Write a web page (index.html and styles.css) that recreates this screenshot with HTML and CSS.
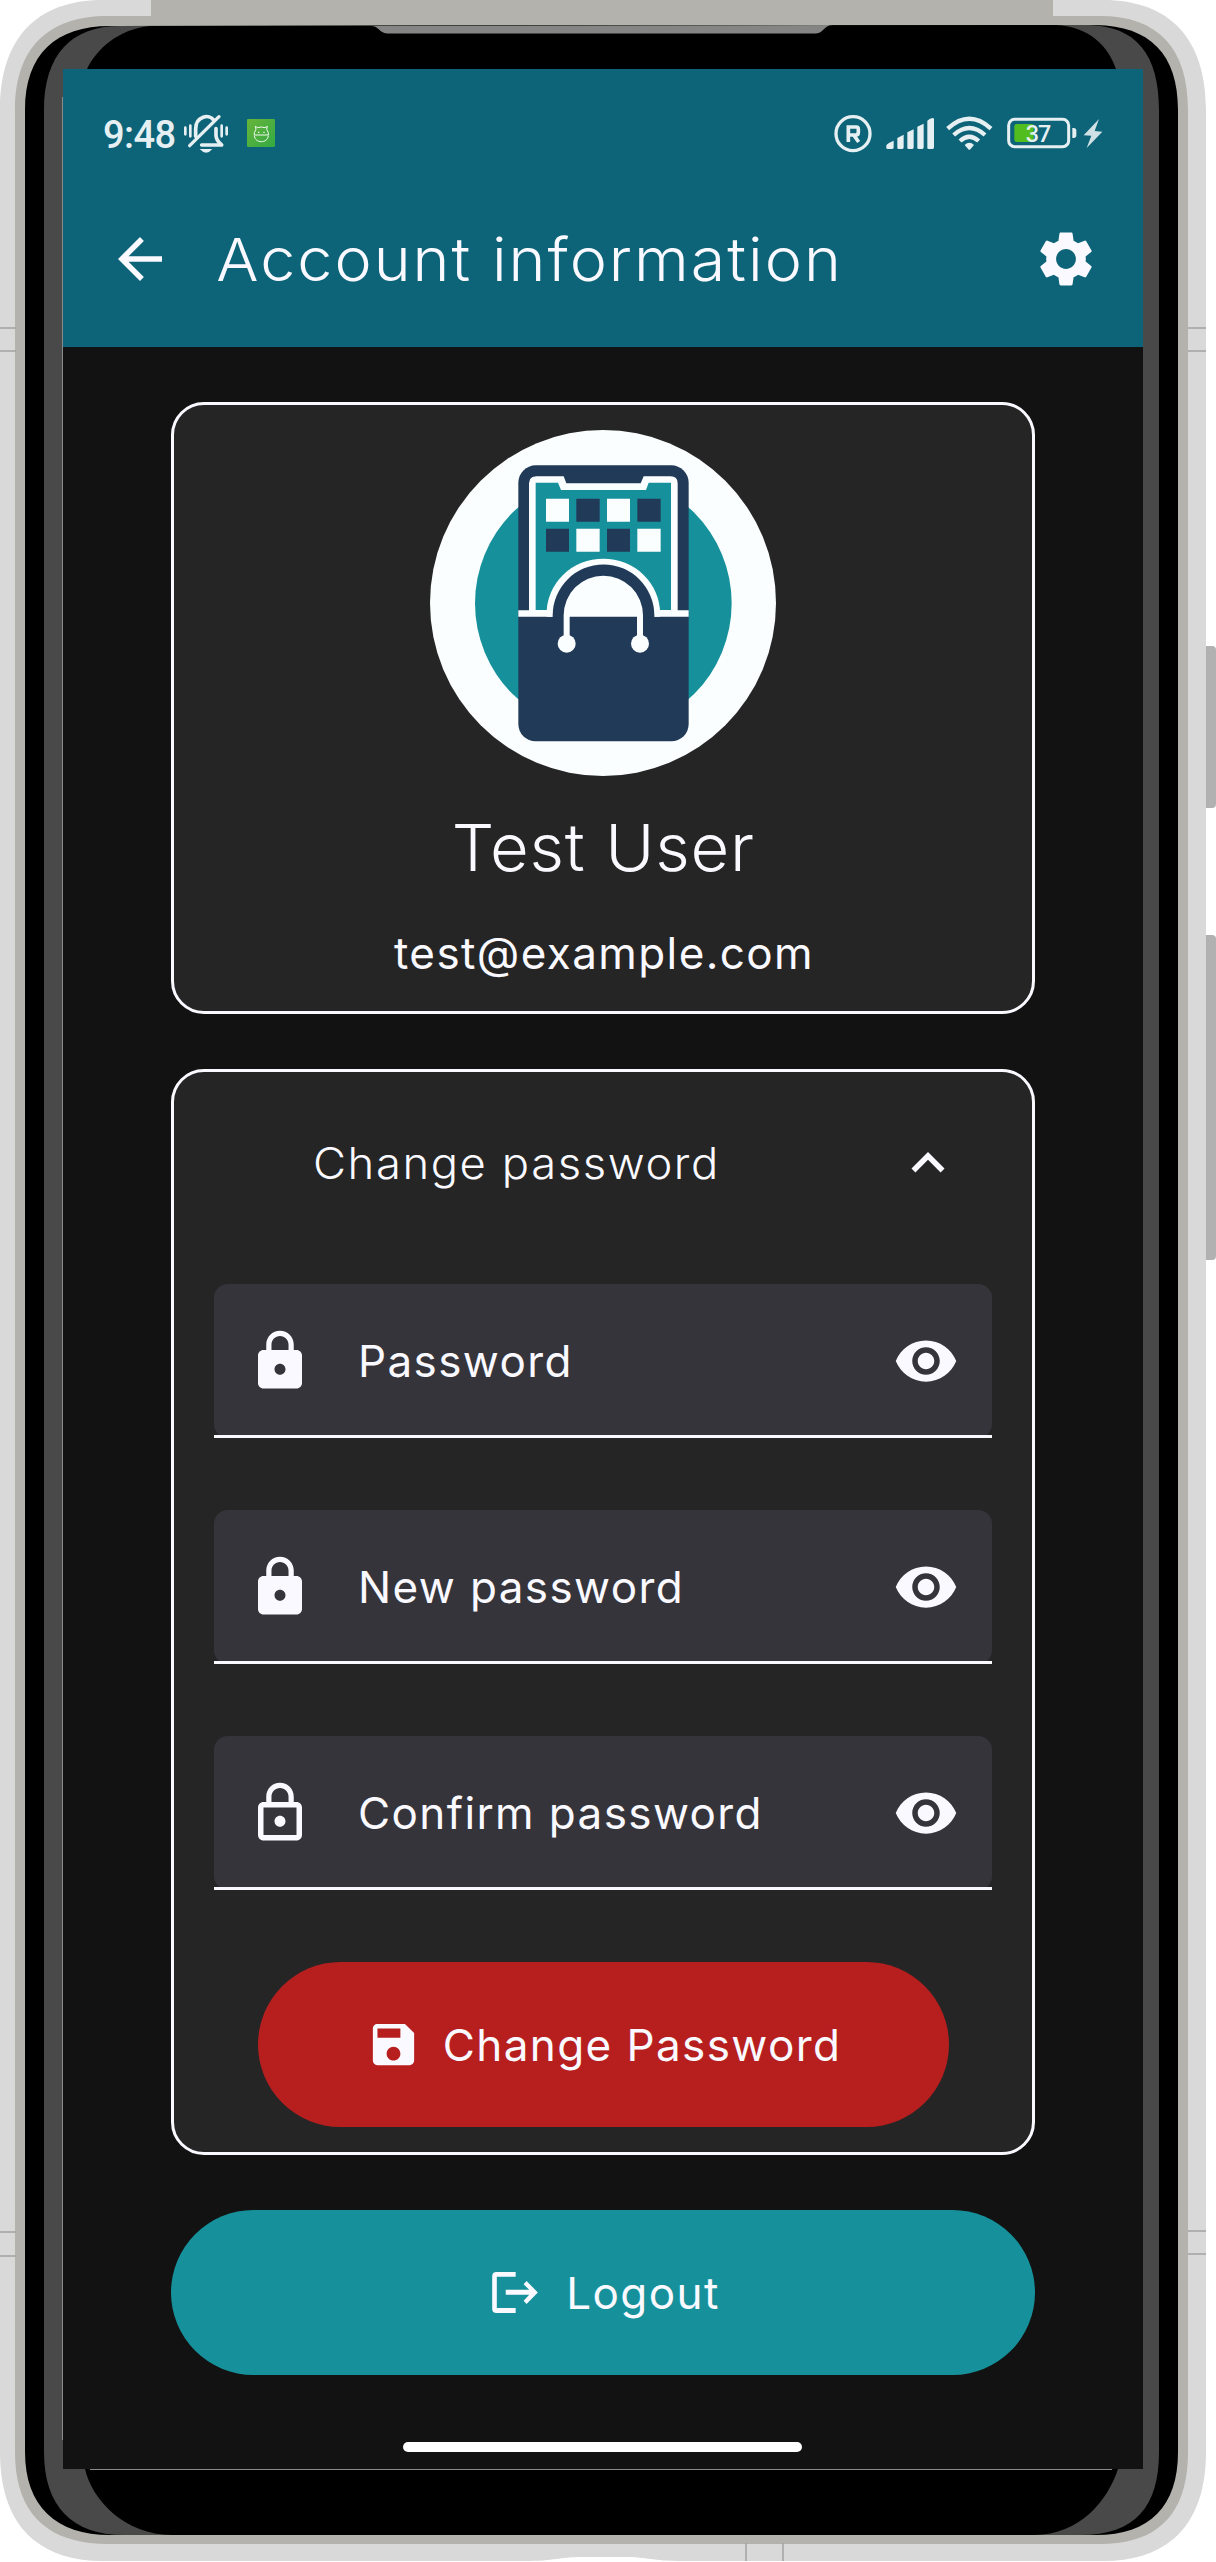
FILE: index.html
```html
<!DOCTYPE html>
<html lang="en">
<head>
<meta charset="utf-8">
<title>Account information</title>
<link rel="stylesheet" href="styles.css">
</head>
<body>
<svg width="0" height="0" class="defs" aria-hidden="true">
  <symbol id="eye" viewBox="0 0 24 24"><path d="M12 4.5C7 4.5 2.73 7.61 1 12c1.73 4.39 6 7.5 11 7.5s9.27-3.11 11-7.5c-1.73-4.39-6-7.5-11-7.5zM12 17c-2.76 0-5-2.24-5-5s2.24-5 5-5 5 2.24 5 5-2.24 5-5 5zm0-8c-1.66 0-3 1.34-3 3s1.34 3 3 3 3-1.34 3-3-1.34-3-3-3z"/></symbol>
  <symbol id="lock" viewBox="0 0 24 24"><path d="M18 8h-1V6c0-2.76-2.24-5-5-5S7 3.24 7 6v2H6c-1.1 0-2 .9-2 2v10c0 1.1.9 2 2 2h12c1.1 0 2-.9 2-2V10c0-1.1-.9-2-2-2zm-6 9c-1.1 0-2-.9-2-2s.9-2 2-2 2 .9 2 2-.9 2-2 2zm3.1-9H8.9V6c0-1.71 1.39-3.1 3.1-3.1s3.1 1.39 3.1 3.1v2z"/></symbol>
  <symbol id="lock-outline" viewBox="0 0 24 24"><path d="M12 17c1.1 0 2-.9 2-2s-.9-2-2-2-2 .9-2 2 .9 2 2 2zm6-9h-1V6c0-2.76-2.24-5-5-5S7 3.24 7 6v2H6c-1.1 0-2 .9-2 2v10c0 1.1.9 2 2 2h12c1.1 0 2-.9 2-2V10c0-1.1-.9-2-2-2zM8.9 6c0-1.71 1.39-3.1 3.1-3.1s3.1 1.39 3.1 3.1v2H8.9V6zM18 20H6V10h12v10z"/></symbol>
</svg>
<div class="phone">
  <svg class="frame" viewBox="0 0 1216 2562" aria-hidden="true">
    <path fill="#b1b1b1" d="M1200 646h12q4 0 4 4v154q0 4-4 4h-12zM1200 935h12q4 0 4 4v317q0 4-4 4h-12z"/>
    <path fill="#d9d9d9" d="M0 110C0 40 35 0 103 0H1103C1171 0 1206 40 1206 110V2452C1206 2522 1171 2561 1103 2561H683C650 2561 650 2557 624 2557H583C557 2557 557 2561 523 2561H103C35 2561 0 2522 0 2452Z"/>
    <path fill="#b3b2ad" d="M15 110C15 48 48 16 108 16H151V0H1053V16H1100C1158 16 1188 48 1188 110V2452C1188 2514 1158 2544 1100 2544H108C48 2544 15 2514 15 2452Z"/>
    <path fill="#000" d="M25 110C25 54 56 26 110 26L1096 25C1150 26 1178 54 1178 110V2452C1178 2506 1150 2535 1096 2535H110C56 2535 25 2506 25 2452Z"/>
    <path fill="#494949" d="M44 110C44 54 72 26 120 26L1088 25C1136 26 1159 54 1159 110V2452C1159 2506 1136 2535 1080 2535H124C72 2535 44 2506 44 2452Z"/>
    <path fill="#000" d="M150 26C118 29 96 50 87 69V2469H85C92 2500 125 2535 172 2535H1034C1080 2535 1108 2500 1118 2469H1116V69C1108 46 1090 27 1056 25Z"/>
    <path fill="#858585" d="M371 26C379 26 379 33 387 33.500H816C824 33 824 25 833 25Z"/>
    <path stroke="#a3a3a1" stroke-width="1.500" d="M0 328H16M0 351H16M1188 328H1206M1188 351H1206M0 2232H16M0 2256H16M1188 2231H1206M1188 2254H1206M746 2543V2561M783 2543V2561"/>
    <path stroke="#8a8a8a" d="M62.500 97V2440M90 2469.500H1112"/>
  </svg>
  <main class="screen">
    <header class="top">
      <div class="status">
        <span class="clock">9:48</span>
        <svg class="bell" width="46" height="40" viewBox="549 342 138 120">
          <g fill="none" stroke="#e6f0f3" stroke-linecap="round">
            <path stroke-width="8" d="M556 383v20M571 377v32M665 377v32M680 383v20"/>
            <path stroke-width="11" stroke-linejoin="round" d="M587 409v-22c0-40 42-45 54-27M648 386v20c0 14 7 21 17 29h-60"/>
            <path stroke-width="10" d="M569 437L657 350"/>
          </g>
          <path fill="#e6f0f3" d="M599 447h38q-18 22-38 0z"/>
        </svg>
        <svg class="droid" width="28" height="40" viewBox="741 342 84 120">
          <defs><linearGradient id="lime" x2="1" y2="1"><stop stop-color="#68b43a"/><stop offset="1" stop-color="#32aa43"/></linearGradient></defs>
          <rect x="741" y="357" width="84" height="84" rx="4" fill="url(#lime)"/>
          <path fill="none" stroke="#f2faef" stroke-width="3" stroke-linejoin="round" d="M763 405v-7l5-10-2-9 7 4q11-4 22 0l7-4-2 9 5 10v7zM763 407c2 24 40 24 42 0"/>
          <path fill="#f2faef" d="M774 395h4v4h-4zM790 395h4v4h-4z"/>
        </svg>
        <svg class="reg" width="38" height="40" viewBox="55 342 114 120">
          <circle cx="112" cy="401" r="51" fill="none" stroke="#e6f0f3" stroke-width="10"/>
          <path fill="none" stroke="#e6f0f3" stroke-width="11" d="M98 426v-45h24q6 0 6 7v9q0 8-7 8h-22M115 406l14 20"/>
        </svg>
        <svg class="signal" width="48" height="40" viewBox="210 342 144 120">
          <path fill="#e6f0f3" d="M211 436q0-4 22-14v20q0 5-4 5h-14q-4 0-4-4zM244 414l19-10v38q0 5-4 5h-11q-4 0-4-4zM274 397l19-9v54q0 5-4 5h-11q-4 0-4-4zM304 380l19-9v71q0 5-4 5h-11q-4 0-4-4zM334 362q8-7 16-8 4 0 4 4v84q0 5-4 5h-12q-4 0-4-4z"/>
        </svg>
        <svg class="wifi" width="47" height="40" viewBox="391 342 141 120">
          <g fill="none" stroke="#e6f0f3" stroke-width="13"><path d="M396 386Q461 327 526 386M414 405Q461 363 508 405M433 423Q461 398 489 423"/></g>
          <path fill="#e6f0f3" d="M447 435q14-13 28 0l-11 13q-3 3-6 0z"/>
        </svg>
        <svg class="battery" width="70" height="40" viewBox="575 342 210 120">
          <rect x="580" y="358" width="180" height="82" rx="18" fill="none" stroke="#e6f0f3" stroke-width="9"/>
          <rect x="597" y="372" width="58" height="54" rx="7" fill="#52bd1e"/>
          <path fill="#e6f0f3" d="M771 384h4q8 0 8 8v14q0 8-8 8h-4z"/>
          <text class="level" x="631" y="426" textLength="77">37</text>
        </svg>
        <svg class="bolt" width="20" height="40" viewBox="803 342 60 120"><path fill="#d0e1e6" d="M851 357l-46 49 23 1-14 37 47-49-23-2z"/></svg>
      </div>
      <div class="bar">
        <svg class="icon" viewBox="0 0 24 24"><path d="M20 11H7.830l5.590-5.590L12 4l-8 8 8 8 1.410-1.410L7.830 13H20v-2z"/></svg>
        <h1 class="title">Account information</h1>
        <svg class="icon" viewBox="0 0 24 24"><path d="M19.140 12.940c.04-.3.060-.61.060-.94 0-.32-.02-.64-.07-.94l2.030-1.580c.18-.14.23-.41.120-.61l-1.920-3.320c-.12-.22-.37-.29-.59-.22l-2.390.96c-.5-.38-1.030-.7-1.620-.94l-.36-2.540c-.04-.24-.24-.41-.48-.41h-3.840c-.24 0-.43.17-.47.41l-.36 2.540c-.59.24-1.130.57-1.620.94l-2.390-.96c-.22-.08-.47 0-.59.22L2.740 8.870c-.12.21-.08.47.120.61l2.030 1.580c-.05.3-.09.63-.09.940s.02.640.070.940l-2.030 1.580c-.18.140-.23.410-.12.610l1.920 3.320c.12.220.37.290.59.220l2.390-.96c.5.380 1.030.7 1.620.94l.36 2.540c.05.240.24.410.48.410h3.840c.24 0 .44-.17.47-.41l.36-2.540c.59-.24 1.130-.56 1.620-.94l2.390.96c.22.080.47 0 .59-.22l1.920-3.320c.12-.22.070-.47-.12-.61l-2.010-1.580zM12 15.600c-1.980 0-3.600-1.620-3.600-3.600s1.620-3.600 3.600-3.600 3.600 1.620 3.600 3.600-1.620 3.600-3.600 3.600z"/></svg>
      </div>
    </header>
    <section class="card profile">
      <svg class="avatar" viewBox="90 90 1038 1038">
        <circle cx="609" cy="609" r="519" fill="#fbfeff"/>
        <circle cx="610" cy="610" r="385" fill="#16919b"/>
        <rect x="355" y="196" width="511" height="828" rx="52" fill="#213a58"/>
        <path fill="#fbfeff" d="M387 631V250q0-21 21-21h83l8 21h223l9-21h81q21 0 21 21v381h33v19H355v-19z"/>
        <path fill="#16919b" d="M407 248h67l9 22h255l8-22h67v382h-34a170 170 0 0 0-338 0h-34z"/>
        <path fill="#213a58" d="M387 229H408q-21 0-21 21z"/>
        <path fill="#fbfeff" d="M438 296h69v69h-69zM621 296h69v69h-69zM529 386h70v69h-70zM712 386h70v69h-70z"/>
        <path fill="#213a58" d="M529 296h70v69h-70zM712 296h70v69h-70zM438 386h69v69h-69zM621 386h69v69h-69z"/>
        <path fill="#fbfeff" d="M440 650v-10a170 164 0 0 1 340 0v10z"/>
        <path fill="#213a58" d="M458 652v-6a152 152 0 0 1 305 0v6z"/>
        <path fill="#fbfeff" d="M491 709V646a119 119 0 0 1 238 0v63h-18v-59H509v59z"/>
        <circle cx="500" cy="731" r="27" fill="#fbfeff"/><circle cx="720" cy="731" r="27" fill="#fbfeff"/>
      </svg>
      <h2 class="name">Test User</h2>
      <p class="email">test@example.com</p>
    </section>
    <section class="card password">
      <div class="expander">
        <h3 class="heading">Change password</h3>
        <svg class="icon" viewBox="0 0 24 24"><path d="M12 8l-6 6 1.410 1.410L12 10.830l4.590 4.580L18 14z"/></svg>
      </div>
      <div class="fields">
        <div class="field"><svg class="icon"><use href="#lock"/></svg><span class="label">Password</span><svg class="icon"><use href="#eye"/></svg></div>
        <div class="field"><svg class="icon"><use href="#lock"/></svg><span class="label">New password</span><svg class="icon"><use href="#eye"/></svg></div>
        <div class="field"><svg class="icon"><use href="#lock-outline"/></svg><span class="label">Confirm password</span><svg class="icon"><use href="#eye"/></svg></div>
      </div>
      <button class="btn save"><svg class="small" viewBox="0 0 24 24"><path d="M17 3H5c-1.110 0-2 .9-2 2v14c0 1.100.890 2 2 2h14c1.100 0 2-.9 2-2V7l-4-4zm-5 16c-1.660 0-3-1.340-3-3s1.340-3 3-3 3 1.340 3 3-1.340 3-3 3zm3-10H5V5h10v4z"/></svg><span>Change Password</span></button>
    </section>
    <button class="btn logout"><svg class="exit" viewBox="277 216 138 124"><path d="M348 216v14h-57v95h57v15h-58q-13 0-13-13V229q0-13 13-13zM381 243l34 35-34 35-9-10 17-18h-71v-15h71l-17-17z"/></svg><span>Logout</span></button>
    <div class="home"></div>
  </main>
</div>
</body>
</html>
```
FILE: styles.css
```css
* { box-sizing: border-box; }
body { margin: 0; background: #fff; font-family: Inter, "Liberation Sans", sans-serif; color: #f9f9ff; }
h1, h2, h3, p { margin: 0; font-weight: 400; white-space: nowrap; }
svg { display: block; flex: none; }
.defs { position: absolute; }
.phone { position: relative; width: 1216px; height: 2562px; padding: 69px 73px 0 63px; overflow: hidden; }
.frame { position: absolute; left: 0; top: 0; width: 1216px; height: 2562px; }
.screen { position: relative; width: 1080px; height: 2400px; background: #121212; display: flex; flex-direction: column; align-items: center; }

.top { display: flex; flex-direction: column; width: 1080px; height: 278px; background: #0d6478; }
.status { display: flex; align-items: center; height: 40px; margin-top: 45px; padding-left: 40px; }
.clock { width: 80px; padding-top: 2px; font: 500 38px/40px Roboto, sans-serif; color: #e6f0f3; letter-spacing: -0.6px; }
.droid { margin-left: 18px; }
.reg { margin-left: 559px; }
.signal { margin-left: 14px; }
.wifi { margin-left: 12px; }
.battery { margin-left: 14px; }
.bolt { margin-left: 6px; }
.level { font: 500 70px Roboto, sans-serif; fill: #e6f0f3; }
.bar { display: flex; align-items: center; height: 66px; margin-top: 72px; padding: 0 44px; }
.icon { width: 66px; height: 66px; fill: #f9f9ff; }
.title { flex: 1; padding-left: 41px; font-size: 59.5px; font-weight: 300; line-height: 66px; letter-spacing: 1.9px; transform: scaleX(1.055); transform-origin: left; }

.card { width: 864px; background: #252525; border: 3px solid #f9f9ff; border-radius: 33px; display: flex; flex-direction: column; align-items: center; }
.profile { height: 612px; margin-top: 55px; padding-top: 25px; }
.avatar { width: 346px; height: 346px; }
.name { margin-top: 32px; font-size: 65px; font-weight: 300; line-height: 80px; letter-spacing: 0.8px; transform: scaleX(1.028); }
.email { margin-top: 39px; padding-left: 2px; font-size: 44px; line-height: 52px; letter-spacing: 1.4px; }

.password { height: 1086px; margin-top: 55px; }
.expander { width: 100%; display: flex; align-items: center; justify-content: space-between; padding: 58px 71px 0 139px; height: 124px; }
.heading { font-size: 43px; font-weight: 300; line-height: 66px; letter-spacing: 1.5px; transform: scaleX(1.055); transform-origin: left; }
.fields { width: 778px; margin-top: 88px; display: flex; flex-direction: column; gap: 72px; }
.field { position: relative; height: 154px; padding: 0 33px 1px; display: flex; align-items: center; background: #36343b; border-radius: 14px; }
.field::after { content: ""; position: absolute; left: 0; right: 0; bottom: 0; height: 3px; background: #f9f9ff; }
.label { flex: 1; padding: 1px 0 0 45px; font-size: 44px; line-height: 60px; letter-spacing: 1.4px; white-space: nowrap; }

.btn { display: flex; align-items: center; justify-content: center; height: 165px; padding: 0; border: 0; border-radius: 83px; color: #f9f9ff; font: 400 44px/60px Inter, "Liberation Sans", sans-serif; letter-spacing: 1.4px; white-space: nowrap; }
.save { width: 691px; margin-top: 72px; padding-left: 1px; background: #b71f1f; gap: 22px; }
.small { width: 55px; height: 55px; fill: #f9f9ff; }
.exit { width: 46px; height: 41px; fill: #f9f9ff; }
.logout { width: 864px; margin-top: 55px; padding-left: 6px; background: #16919b; gap: 28px; }
.home { width: 399px; height: 10px; margin: 67px 1px 0 0; border-radius: 5px; background: #fff; }
```
